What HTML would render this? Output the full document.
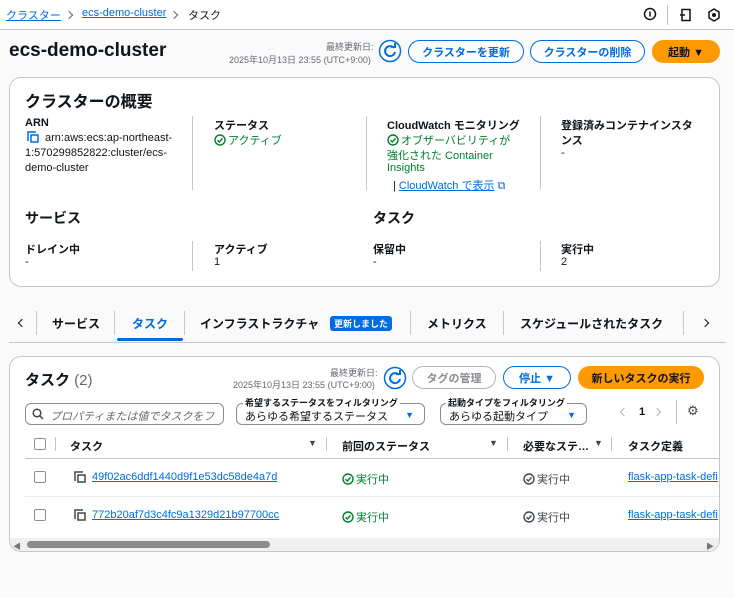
<!DOCTYPE html>
<html><head><meta charset="utf-8"><style>
*{box-sizing:border-box;margin:0;padding:0}
body{width:734px;height:598px;overflow:hidden;background:#fafafa;font-family:"Liberation Sans","Noto Sans CJK JP",sans-serif;color:#0f141a;font-size:11px;position:relative}
.a{position:absolute;white-space:nowrap}
.lnk{color:#006ce0;text-decoration:underline}
.b{font-weight:bold}
.btn{position:absolute;border:1.5px solid #006ce0;border-radius:14px;color:#006ce0;font-weight:bold;font-size:11px;display:flex;align-items:center;justify-content:center;background:#fff}
.or{background:#ff9900;border-color:#ff9900;color:#0f141a}
.panel{position:absolute;left:9px;width:711px;background:#fff;border:1px solid #c6c6cd;border-radius:12px}
.vd{position:absolute;width:1px;background:#c6c6cd}
.g{color:#00802f}
.sm{font-size:9px;color:#656871}
.sel{position:absolute;border:1px solid #8c8c94;border-radius:6px;background:#fff;height:22px;font-size:11px;padding:4px 8px}
.cb{position:absolute;width:12px;height:12px;border:1px solid #8c8c94;border-radius:2px;background:#fff}
.ck{display:inline-block;vertical-align:-2px;margin-right:2px}
.chev{position:absolute;width:6px;height:6px;border-top:1.3px solid #656871;border-right:1.3px solid #656871;transform:rotate(45deg)}
</style></head><body>
<svg width="0" height="0" style="position:absolute"><defs><symbol id="ck" viewBox="0 0 12 12"><circle cx="6" cy="6" r="5" fill="none" stroke="currentColor" stroke-width="1.4"/><path d="M3.5 6.2l1.8 1.8 3.2-3.6" fill="none" stroke="currentColor" stroke-width="1.4"/></symbol></defs></svg>
<div class="a" style="top:0;left:0;width:734px;height:30px;background:#fff;border-bottom:1px solid #c6c6cd"></div>
<div class="a lnk" style="left:6px;top:7px">クラスター</div>
<div class="chev" style="left:66px;top:12px"></div>
<div class="a lnk" style="left:82px;top:7px">ecs-demo-cluster</div>
<div class="chev" style="left:171px;top:12px"></div>
<div class="a" style="left:188px;top:7px">タスク</div>
<svg class="a" style="left:643px;top:7px" width="14" height="14"><circle cx="7" cy="7" r="5.5" fill="none" stroke="#0f141a" stroke-width="1.5"/><path d="M7 4.5v5" stroke="#0f141a" stroke-width="1.5"/></svg>
<div class="vd" style="left:667px;top:5px;height:20px"></div>
<svg class="a" style="left:679px;top:8px" width="14" height="14"><rect x="3" y="1.5" width="8" height="11" fill="none" stroke="#0f141a" stroke-width="1.5"/><path d="M1 7h5" stroke="#0f141a" stroke-width="1.5"/></svg>
<svg class="a" style="left:707px;top:8px" width="14" height="14"><path d="M7 1l5 3v6l-5 3-5-3V4z" fill="none" stroke="#0f141a" stroke-width="1.5"/><circle cx="7" cy="7" r="2" fill="#0f141a"/></svg>

<div class="a b" style="left:9px;top:40px;font-size:19px">ecs-demo-cluster</div>
<div class="a sm" style="left:326px;top:40px">最終更新日:</div>
<div class="a sm" style="left:229px;top:53px">2025年10月13日 23:55 (UTC+9:00)</div>
<svg class="a" style="left:378px;top:39px" width="24" height="24"><circle cx="12" cy="12" r="10.5" fill="#fff" stroke="#006ce0" stroke-width="1.5"/><path d="M16 9a5 5 0 1 0 1 4" fill="none" stroke="#006ce0" stroke-width="2"/><path d="M13 8h4V4" fill="none" stroke="#006ce0" stroke-width="2"/></svg>
<div class="btn" style="left:408px;top:40px;width:116px;height:23px">クラスターを更新</div>
<div class="btn" style="left:530px;top:40px;width:115px;height:23px">クラスターの削除</div>
<div class="btn or" style="left:652px;top:40px;width:68px;height:23px">起動 ▼</div>

<div class="panel" style="top:77px;height:210px"></div>
<div class="a b" style="left:25px;top:88px;font-size:16px">クラスターの概要</div>
<div class="a b" style="left:25px;top:117px">ARN</div>
<svg class="a" style="left:27px;top:131px" width="12" height="12"><path d="M1 10V1h8" fill="none" stroke="#006ce0" stroke-width="1.5"/><rect x="4" y="4" width="7" height="7" fill="none" stroke="#006ce0" stroke-width="1.5"/></svg>
<div class="a" style="left:45px;top:132px">arn:aws:ecs:ap-northeast-</div>
<div class="a" style="left:25px;top:147px">1:570299852822:cluster/ecs-</div>
<div class="a" style="left:25px;top:162px">demo-cluster</div>
<div class="vd" style="left:192px;top:116px;height:74px"></div>
<div class="a b" style="left:214px;top:117px">ステータス</div>
<div class="a g" style="left:214px;top:132px"><svg class="ck" width="12" height="12"><use href="#ck"/></svg>アクティブ</div>
<div class="vd" style="left:366px;top:116px;height:74px"></div>
<div class="a b" style="left:387px;top:117px">CloudWatch モニタリング</div>
<div class="a g" style="left:387px;top:132px"><svg class="ck" width="12" height="12"><use href="#ck"/></svg>オブザーバビリティが</div>
<div class="a g" style="left:387px;top:147px">強化された Container</div>
<div class="a g" style="left:387px;top:162px">Insights</div>
<div class="a" style="left:393px;top:177px">| <span class="lnk">CloudWatch で表示</span> <span style="color:#006ce0">⧉</span></div>
<div class="vd" style="left:540px;top:116px;height:74px"></div>
<div class="a b" style="left:561px;top:117px">登録済みコンテナインスタ</div>
<div class="a b" style="left:561px;top:132px">ンス</div>
<div class="a" style="left:561px;top:147px">-</div>
<div class="a b" style="left:25px;top:208px;font-size:14px">サービス</div>
<div class="a b" style="left:373px;top:208px;font-size:14px">タスク</div>
<div class="a b" style="left:25px;top:241px">ドレイン中</div><div class="a" style="left:25px;top:256px">-</div>
<div class="vd" style="left:192px;top:241px;height:30px"></div>
<div class="a b" style="left:214px;top:241px">アクティブ</div><div class="a" style="left:214px;top:256px">1</div>
<div class="a b" style="left:373px;top:241px">保留中</div><div class="a" style="left:373px;top:256px">-</div>
<div class="vd" style="left:540px;top:241px;height:30px"></div>
<div class="a b" style="left:561px;top:241px">実行中</div><div class="a" style="left:561px;top:256px">2</div>

<div class="chev" style="left:19px;top:320px;transform:rotate(-135deg);border-color:#0f141a"></div>
<div class="vd" style="left:36px;top:311px;height:24px"></div>
<div class="a b" style="left:52px;top:315px;font-size:12px">サービス</div>
<div class="vd" style="left:114px;top:311px;height:24px"></div>
<div class="a b" style="left:132px;top:315px;font-size:12px;color:#006ce0">タスク</div>
<div class="a" style="left:117px;top:338px;width:66px;height:3px;background:#006ce0;border-radius:2px"></div>
<div class="vd" style="left:184px;top:311px;height:24px"></div>
<div class="a b" style="left:200px;top:315px;font-size:12px">インフラストラクチャ</div>
<div class="a b" style="left:330px;top:316px;background:#006ce0;color:#fff;font-size:9px;padding:1px 4px;border-radius:3px">更新しました</div>
<div class="vd" style="left:410px;top:311px;height:24px"></div>
<div class="a b" style="left:427px;top:315px;font-size:12px">メトリクス</div>
<div class="vd" style="left:503px;top:311px;height:24px"></div>
<div class="a b" style="left:520px;top:315px;font-size:12px">スケジュールされたタスク</div>
<div class="vd" style="left:683px;top:311px;height:24px"></div>
<div class="chev" style="left:702px;top:320px;border-color:#0f141a"></div>
<div class="a" style="left:9px;top:342px;width:717px;height:1px;background:#c6c6cd"></div>

<div class="panel" style="top:356px;height:196px"></div>
<div class="a b" style="left:25px;top:369px;font-size:15px">タスク <span style="font-weight:normal;color:#656871">(2)</span></div>
<div class="a sm" style="left:330px;top:366px">最終更新日:</div>
<div class="a sm" style="left:233px;top:378px">2025年10月13日 23:55 (UTC+9:00)</div>
<svg class="a" style="left:383px;top:366px" width="24" height="24"><circle cx="12" cy="12" r="10.5" fill="#fff" stroke="#006ce0" stroke-width="1.5"/><path d="M16 9a5 5 0 1 0 1 4" fill="none" stroke="#006ce0" stroke-width="2"/><path d="M13 8h4V4" fill="none" stroke="#006ce0" stroke-width="2"/></svg>
<div class="btn" style="left:412px;top:366px;width:84px;height:23px;border-color:#b4b4bb;color:#8c8c94">タグの管理</div>
<div class="btn" style="left:503px;top:366px;width:68px;height:23px">停止 ▼</div>
<div class="btn or" style="left:578px;top:366px;width:126px;height:23px">新しいタスクの実行</div>
<div class="sel" style="left:25px;top:403px;width:199px;color:#656871;font-style:italic;padding-left:24px;overflow:hidden">プロパティまたは値でタスクをフ</div>
<svg class="a" style="left:32px;top:408px" width="12" height="12"><circle cx="5" cy="5" r="3.8" fill="none" stroke="#424650" stroke-width="1.5"/><path d="M8 8l3 3" stroke="#424650" stroke-width="1.5"/></svg>
<div class="sel" style="left:236px;top:403px;width:189px">あらゆる希望するステータス<span style="position:absolute;right:10px;color:#006ce0;font-size:9px;top:6px">▼</span></div>
<div class="a b" style="left:243px;top:396px;font-size:9px;background:#fff;padding:0 2px">希望するステータスをフィルタリング</div>
<div class="sel" style="left:440px;top:403px;width:147px">あらゆる起動タイプ<span style="position:absolute;right:10px;color:#006ce0;font-size:9px;top:6px">▼</span></div>
<div class="a b" style="left:446px;top:396px;font-size:9px;background:#fff;padding:0 2px">起動タイプをフィルタリング</div>
<div class="chev" style="left:621px;top:409px;transform:rotate(-135deg);border-color:#b4b4bb"></div>
<div class="a b" style="left:639px;top:406px">1</div>
<div class="chev" style="left:654px;top:409px;border-color:#b4b4bb"></div>
<div class="vd" style="left:676px;top:400px;height:24px"></div>
<div class="a" style="left:687px;top:403px;font-size:13px;color:#424650">⚙</div>

<div class="cb" style="left:34px;top:438px"></div>
<div class="vd" style="left:55px;top:437px;height:14px"></div>
<div class="a b" style="left:70px;top:438px">タスク</div>
<div class="a" style="left:308px;top:438px;font-size:9px;color:#424650">▼</div>
<div class="vd" style="left:326px;top:437px;height:14px"></div>
<div class="a b" style="left:342px;top:438px">前回のステータス</div>
<div class="a" style="left:489px;top:438px;font-size:9px;color:#424650">▼</div>
<div class="vd" style="left:507px;top:437px;height:14px"></div>
<div class="a b" style="left:523px;top:438px">必要なステ…</div>
<div class="a" style="left:594px;top:438px;font-size:9px;color:#424650">▼</div>
<div class="vd" style="left:611px;top:437px;height:14px"></div>
<div class="a b" style="left:628px;top:438px">タスク定義</div>
<div class="a" style="left:25px;top:458px;width:694px;height:1px;background:#c6c6cd"></div>
<div class="a" style="left:25px;top:496px;width:694px;height:1px;background:#e9ebed"></div>

<div class="cb" style="left:34px;top:471px"></div>
<svg class="a" style="left:74px;top:471px" width="12" height="12"><path d="M1 10V1h8" fill="none" stroke="#424650" stroke-width="1.5"/><rect x="4" y="4" width="7" height="7" fill="none" stroke="#424650" stroke-width="1.5"/></svg>
<div class="a lnk" style="left:92px;top:471px">49f02ac6ddf1440d9f1e53dc58de4a7d</div>
<div class="a g" style="left:342px;top:471px"><svg class="ck" width="12" height="12"><use href="#ck"/></svg>実行中</div>
<div class="a" style="left:523px;top:471px;color:#424650"><svg class="ck" width="12" height="12"><use href="#ck"/></svg>実行中</div>
<div class="a lnk" style="left:628px;top:471px">flask-app-task-defi</div>

<div class="cb" style="left:34px;top:509px"></div>
<svg class="a" style="left:74px;top:509px" width="12" height="12"><path d="M1 10V1h8" fill="none" stroke="#424650" stroke-width="1.5"/><rect x="4" y="4" width="7" height="7" fill="none" stroke="#424650" stroke-width="1.5"/></svg>
<div class="a lnk" style="left:92px;top:509px">772b20af7d3c4fc9a1329d21b97700cc</div>
<div class="a g" style="left:342px;top:509px"><svg class="ck" width="12" height="12"><use href="#ck"/></svg>実行中</div>
<div class="a" style="left:523px;top:509px;color:#424650"><svg class="ck" width="12" height="12"><use href="#ck"/></svg>実行中</div>
<div class="a lnk" style="left:628px;top:509px">flask-app-task-defi</div>

<div class="a" style="left:10px;top:538px;width:709px;height:13px;background:#f0f0f0;border-radius:0 0 11px 11px"></div>
<div class="a" style="left:13px;top:541px;font-size:8px;color:#777">◀</div>
<div class="a" style="left:27px;top:541px;width:243px;height:7px;background:#8c8c8c;border-radius:4px"></div>
<div class="a" style="left:706px;top:541px;font-size:8px;color:#777">▶</div>
</body></html>
